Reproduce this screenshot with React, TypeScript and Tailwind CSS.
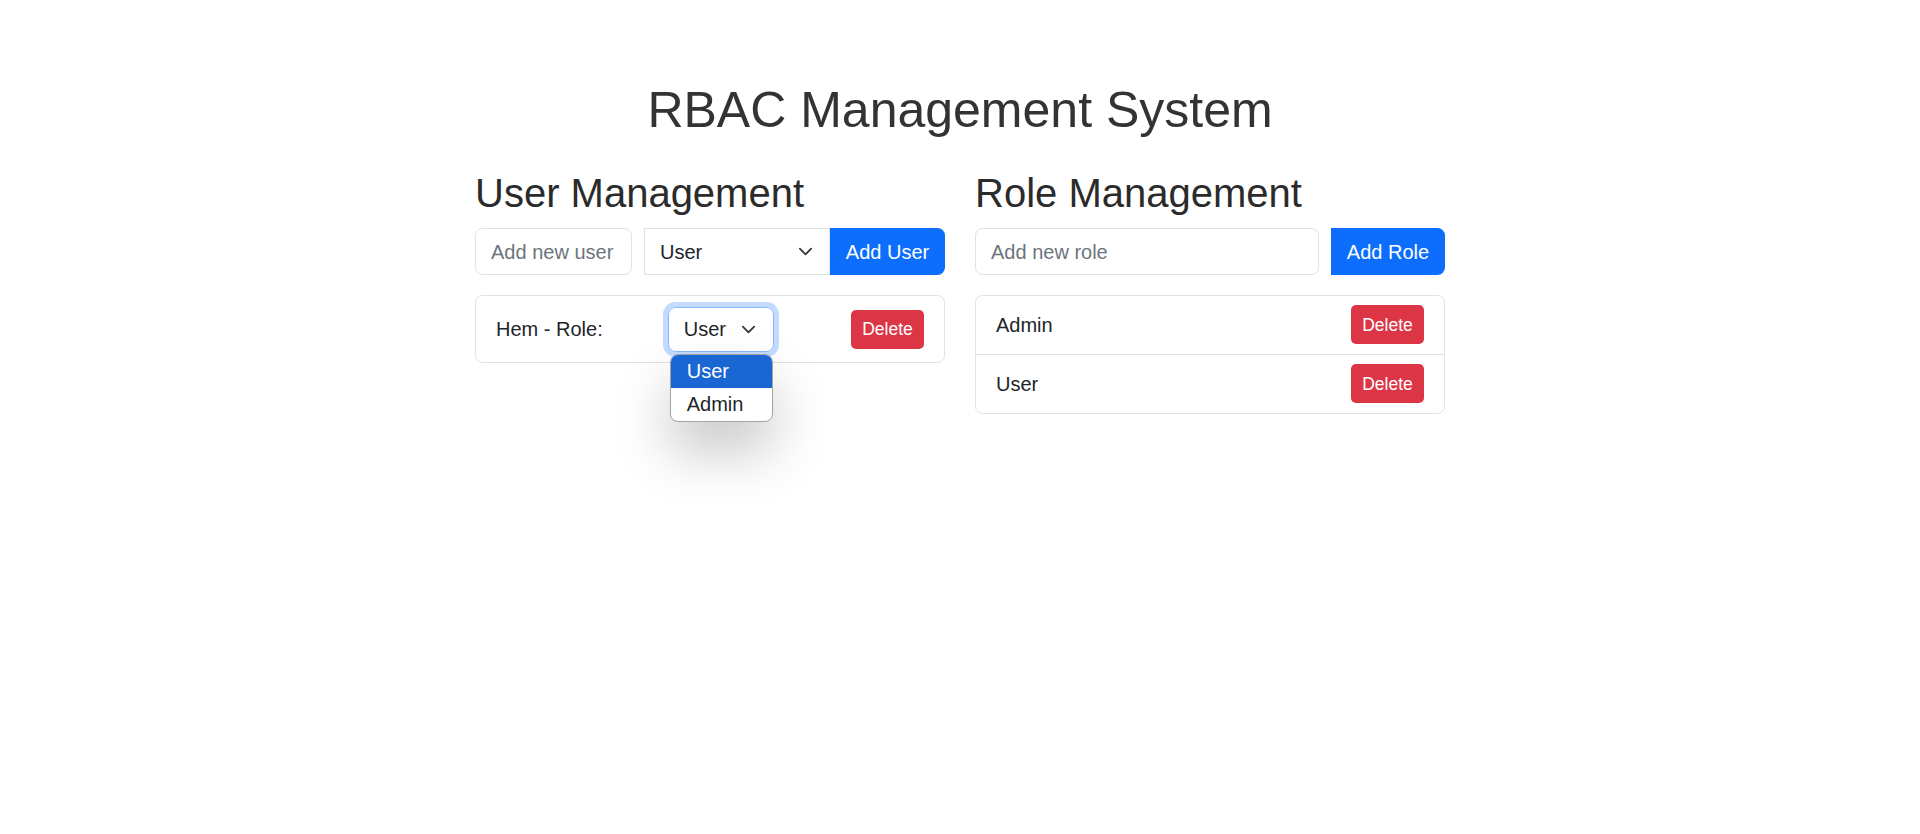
import React from "react"

function Chevron({ className = "" }: { className?: string }) {
  return (
    <svg width="15" height="15" viewBox="0 0 16 16" className={className}>
      <path d="m2 5 6 6 6-6" fill="none" stroke="#343a40" strokeWidth="2" strokeLinecap="round" strokeLinejoin="round" />
    </svg>
  )
}

function DeleteButton() {
  return (
    <button className="h-[39px] w-[73px] rounded-[5px] bg-[#dc3545] text-[17.5px] leading-[26px] text-white">
      Delete
    </button>
  )
}

export default function App() {
  const roles = ["Admin", "User"]

  return (
    <div className="min-h-screen bg-white font-['Liberation_Sans',Arial,sans-serif] text-[#212529]">
      <div className="mx-auto w-[970px] pt-[80px]">
        <h1 className="mb-[29px] text-center text-[50px] leading-[60px] text-[#333]">RBAC Management System</h1>

        <div className="grid grid-cols-2 gap-[30px]">
          {/* users */}
          <section>
            <h2 className="mb-[11px] text-[40px] leading-[48px] text-[#2b2b2b]">User Management</h2>
            <div className="flex h-[47px] text-[20px]">
              <div className="flex w-[157px] items-center rounded-[7.5px] border border-[#dee2e6] px-[15px] text-[#6c757d]">
                Add new user
              </div>
              <div className="ml-[12px] flex w-[186px] items-center justify-between border border-[#dee2e6] pl-[15px] pr-[16px]">
                <span>User</span>
                <Chevron />
              </div>
              <button className="w-[115px] rounded-r-[7.5px] bg-[#0d6efd] text-white">Add User</button>
            </div>

            <div className="mt-[20px] flex h-[68px] items-center rounded-[7.5px] border border-[#dee2e6] px-[20px] text-[20px]">
              <span>Hem - Role:</span>
              <div className="relative ml-[65px]">
                <div className="flex h-[45px] w-[106px] items-center justify-between rounded-[7.5px] border border-[#86b7fe] pl-[15px] pr-[17px] shadow-[0_0_0_5px_rgba(13,110,253,0.25)]">
                  <span>User</span>
                  <Chevron />
                </div>
                <ul className="absolute left-[2px] top-[47px] z-10 w-[103px] overflow-hidden rounded-[8px] border border-[#a3a3a3] bg-white shadow-[0_30px_55px_rgba(0,0,0,0.22)]">
                  <li className="flex h-[33px] items-center bg-[#1a67d3] pl-[16px] text-white">User</li>
                  <li className="flex h-[33px] items-center pl-[16px]">Admin</li>
                </ul>
              </div>
              <div className="ml-auto">
                <DeleteButton />
              </div>
            </div>
          </section>

          {/* roles */}
          <section>
            <h2 className="mb-[11px] text-[40px] leading-[48px] text-[#2b2b2b]">Role Management</h2>
            <div className="flex h-[47px] text-[20px]">
              <div className="flex flex-1 items-center rounded-[7.5px] border border-[#dee2e6] px-[15px] text-[#6c757d]">
                Add new role
              </div>
              <button className="ml-[12px] w-[114px] rounded-r-[7.5px] bg-[#0d6efd] text-white">Add Role</button>
            </div>

            <div className="mt-[20px] divide-y divide-[#dee2e6] rounded-[7.5px] border border-[#dee2e6] text-[20px]">
              {roles.map((r) => (
                <div key={r} className="flex h-[58.5px] items-center justify-between px-[20px]">
                  <span>{r}</span>
                  <DeleteButton />
                </div>
              ))}
            </div>
          </section>
        </div>
      </div>
    </div>
  )
}
